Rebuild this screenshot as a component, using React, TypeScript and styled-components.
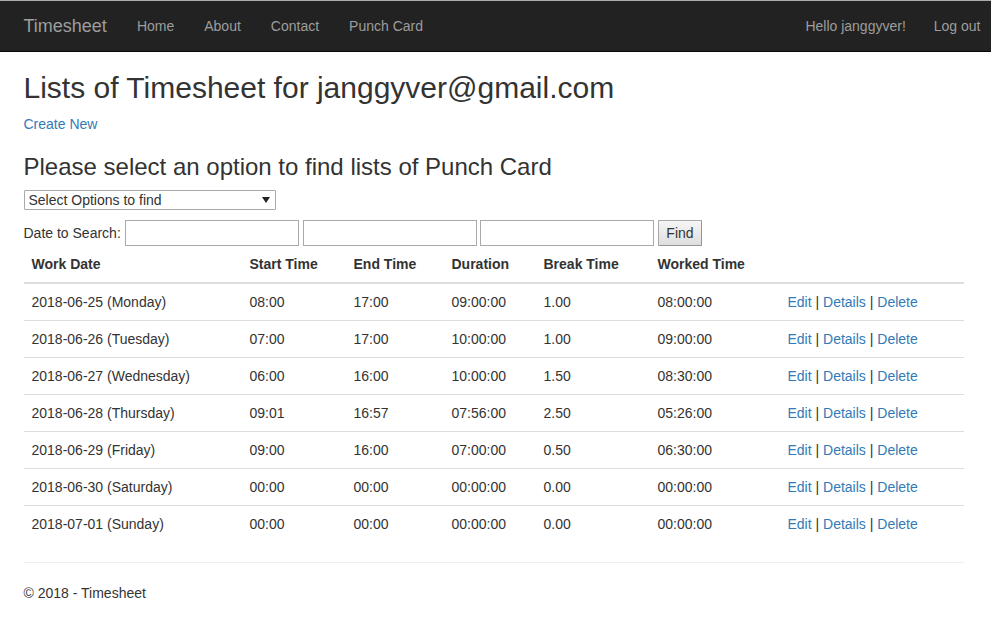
import React from 'react';
import styled, { createGlobalStyle } from 'styled-components';

const GlobalStyle = createGlobalStyle`
  *, *::before, *::after { box-sizing: border-box; }
  body {
    margin: 0;
    background: #fff;
    color: #333;
    font: 14px/20px "Liberation Sans", Arial, sans-serif;
  }
`;

const Navbar = styled.nav`
  padding-right: 4px;
  background: #222;
  border-top: 1px solid #a9acab;
  border-bottom: 1px solid #080808;
`;

const NavInner = styled.div`
  display: flex;
  justify-content: space-between;
  max-width: 970px;
  margin: 0 auto;
`;

const NavGroup = styled.div`
  display: flex;
`;

const NavLink = styled.a<{ $brand?: boolean }>`
  padding: 15px;
  color: #9d9d9d;
  font-size: ${(p) => (p.$brand ? 18 : 14)}px;
  line-height: 20px;
  text-decoration: none;
  white-space: nowrap;
  &:hover { color: #fff; }
`;

const UserGroup = styled(NavGroup)`
  gap: 28px;
  margin-right: -2px;
  ${NavLink} { padding: 15px 0; }
`;

const Page = styled.div`
  padding-right: 4px;
`;

const Content = styled.main`
  max-width: 970px;
  margin: 0 auto;
  padding: 0 15px;
`;

const Title = styled.h2`
  margin: 19px 0 10px;
  font-size: 30px;
  font-weight: 400;
  line-height: 33px;
`;

const Subtitle = styled.h3`
  margin: 20px 0 10px;
  font-size: 24px;
  font-weight: 400;
  line-height: 26px;
`;

const TextLink = styled.a`
  color: #337ab7;
  text-decoration: none;
  &:hover { text-decoration: underline; }
`;

const Paragraph = styled.p`
  margin: 0;
`;

const SelectWrap = styled.div`
  position: relative;
  width: 252px;
  &::after {
    content: '';
    position: absolute;
    right: 6px;
    top: 7px;
    border: solid transparent;
    border-width: 6px 4px 0;
    border-top-color: #222;
    pointer-events: none;
  }
`;

const OptionSelect = styled.select`
  display: block;
  width: 100%;
  height: 20px;
  padding: 0 4px;
  appearance: none;
  border: 1px solid #a9a9a9;
  border-radius: 1px;
  background: #fff;
  color: #333;
  font: inherit;
  line-height: 18px;
`;

const SearchForm = styled.form`
  margin-top: 10px;
`;

const SearchInput = styled.input`
  width: 174px;
  height: 26px;
  padding: 2px 4px;
  border: 1px solid #a9a9a9;
  font: inherit;
`;

const FindButton = styled.button`
  height: 26px;
  padding: 0 7px;
  border: 1px solid;
  border-color: #a9a9a9 #959595 #959595 #a9a9a9;
  border-radius: 1px;
  background: linear-gradient(#f6f6f6, #dedede);
  color: #333;
  font: inherit;
`;

const Table = styled.table`
  width: 100%;
  border-collapse: collapse;
  table-layout: fixed;
`;

const Col = styled.col<{ $width?: number }>`
  width: ${(p) => (p.$width ? `${p.$width}px` : 'auto')};
`;

const HeadCell = styled.th`
  padding: 8px;
  border-bottom: 2px solid #ddd;
  text-align: left;
`;

const Cell = styled.td`
  height: 37px;
  padding: 8px;
  border-top: 1px solid #ddd;
  white-space: nowrap;
`;

const Footer = styled.footer`
  margin-top: 19px;
  padding-top: 20px;
  border-top: 1px solid #eee;
`;

const columns = [
  { label: 'Work Date', width: 218 },
  { label: 'Start Time', width: 104 },
  { label: 'End Time', width: 98 },
  { label: 'Duration', width: 92 },
  { label: 'Break Time', width: 114 },
  { label: 'Worked Time', width: 130 },
  { label: '' },
];

const rows = [
  ['2018-06-25 (Monday)', '08:00', '17:00', '09:00:00', '1.00', '08:00:00'],
  ['2018-06-26 (Tuesday)', '07:00', '17:00', '10:00:00', '1.00', '09:00:00'],
  ['2018-06-27 (Wednesday)', '06:00', '16:00', '10:00:00', '1.50', '08:30:00'],
  ['2018-06-28 (Thursday)', '09:01', '16:57', '07:56:00', '2.50', '05:26:00'],
  ['2018-06-29 (Friday)', '09:00', '16:00', '07:00:00', '0.50', '06:30:00'],
  ['2018-06-30 (Saturday)', '00:00', '00:00', '00:00:00', '0.00', '00:00:00'],
  ['2018-07-01 (Sunday)', '00:00', '00:00', '00:00:00', '0.00', '00:00:00'],
];

export default function App() {
  return (
    <>
      <GlobalStyle />
      <Navbar>
        <NavInner>
          <NavGroup>
            <NavLink href="#" $brand>Timesheet</NavLink>
            {['Home', 'About', 'Contact', 'Punch Card'].map((item) => (
              <NavLink href="#" key={item}>{item}</NavLink>
            ))}
          </NavGroup>
          <UserGroup>
            <NavLink href="#">Hello janggyver!</NavLink>
            <NavLink href="#">Log out</NavLink>
          </UserGroup>
        </NavInner>
      </Navbar>
      <Page>
        <Content>
          <Title>Lists of Timesheet for janggyver@gmail.com</Title>
          <Paragraph><TextLink href="#">Create New</TextLink></Paragraph>
          <Subtitle>Please select an option to find lists of Punch Card</Subtitle>
          <SelectWrap>
            <OptionSelect aria-label="Search option">
              <option>Select Options to find</option>
            </OptionSelect>
          </SelectWrap>
          <SearchForm onSubmit={(e) => e.preventDefault()}>
            <label htmlFor="date">Date to Search:</label>{' '}
            <SearchInput id="date" />{' '}
            <SearchInput aria-label="Start date" />{' '}
            <SearchInput aria-label="End date" />{' '}
            <FindButton type="submit">Find</FindButton>
          </SearchForm>
          <Table>
            <colgroup>
              {columns.map((c, i) => <Col key={i} $width={c.width} />)}
            </colgroup>
            <thead>
              <tr>{columns.map((c, i) => <HeadCell key={i}>{c.label}</HeadCell>)}</tr>
            </thead>
            <tbody>
              {rows.map((row) => (
                <tr key={row[0]}>
                  {row.map((value, i) => <Cell key={i}>{value}</Cell>)}
                  <Cell>
                    <TextLink href="#">Edit</TextLink> | <TextLink href="#">Details</TextLink> | <TextLink href="#">Delete</TextLink>
                  </Cell>
                </tr>
              ))}
            </tbody>
          </Table>
          <Footer>© 2018 - Timesheet</Footer>
        </Content>
      </Page>
    </>
  );
}
